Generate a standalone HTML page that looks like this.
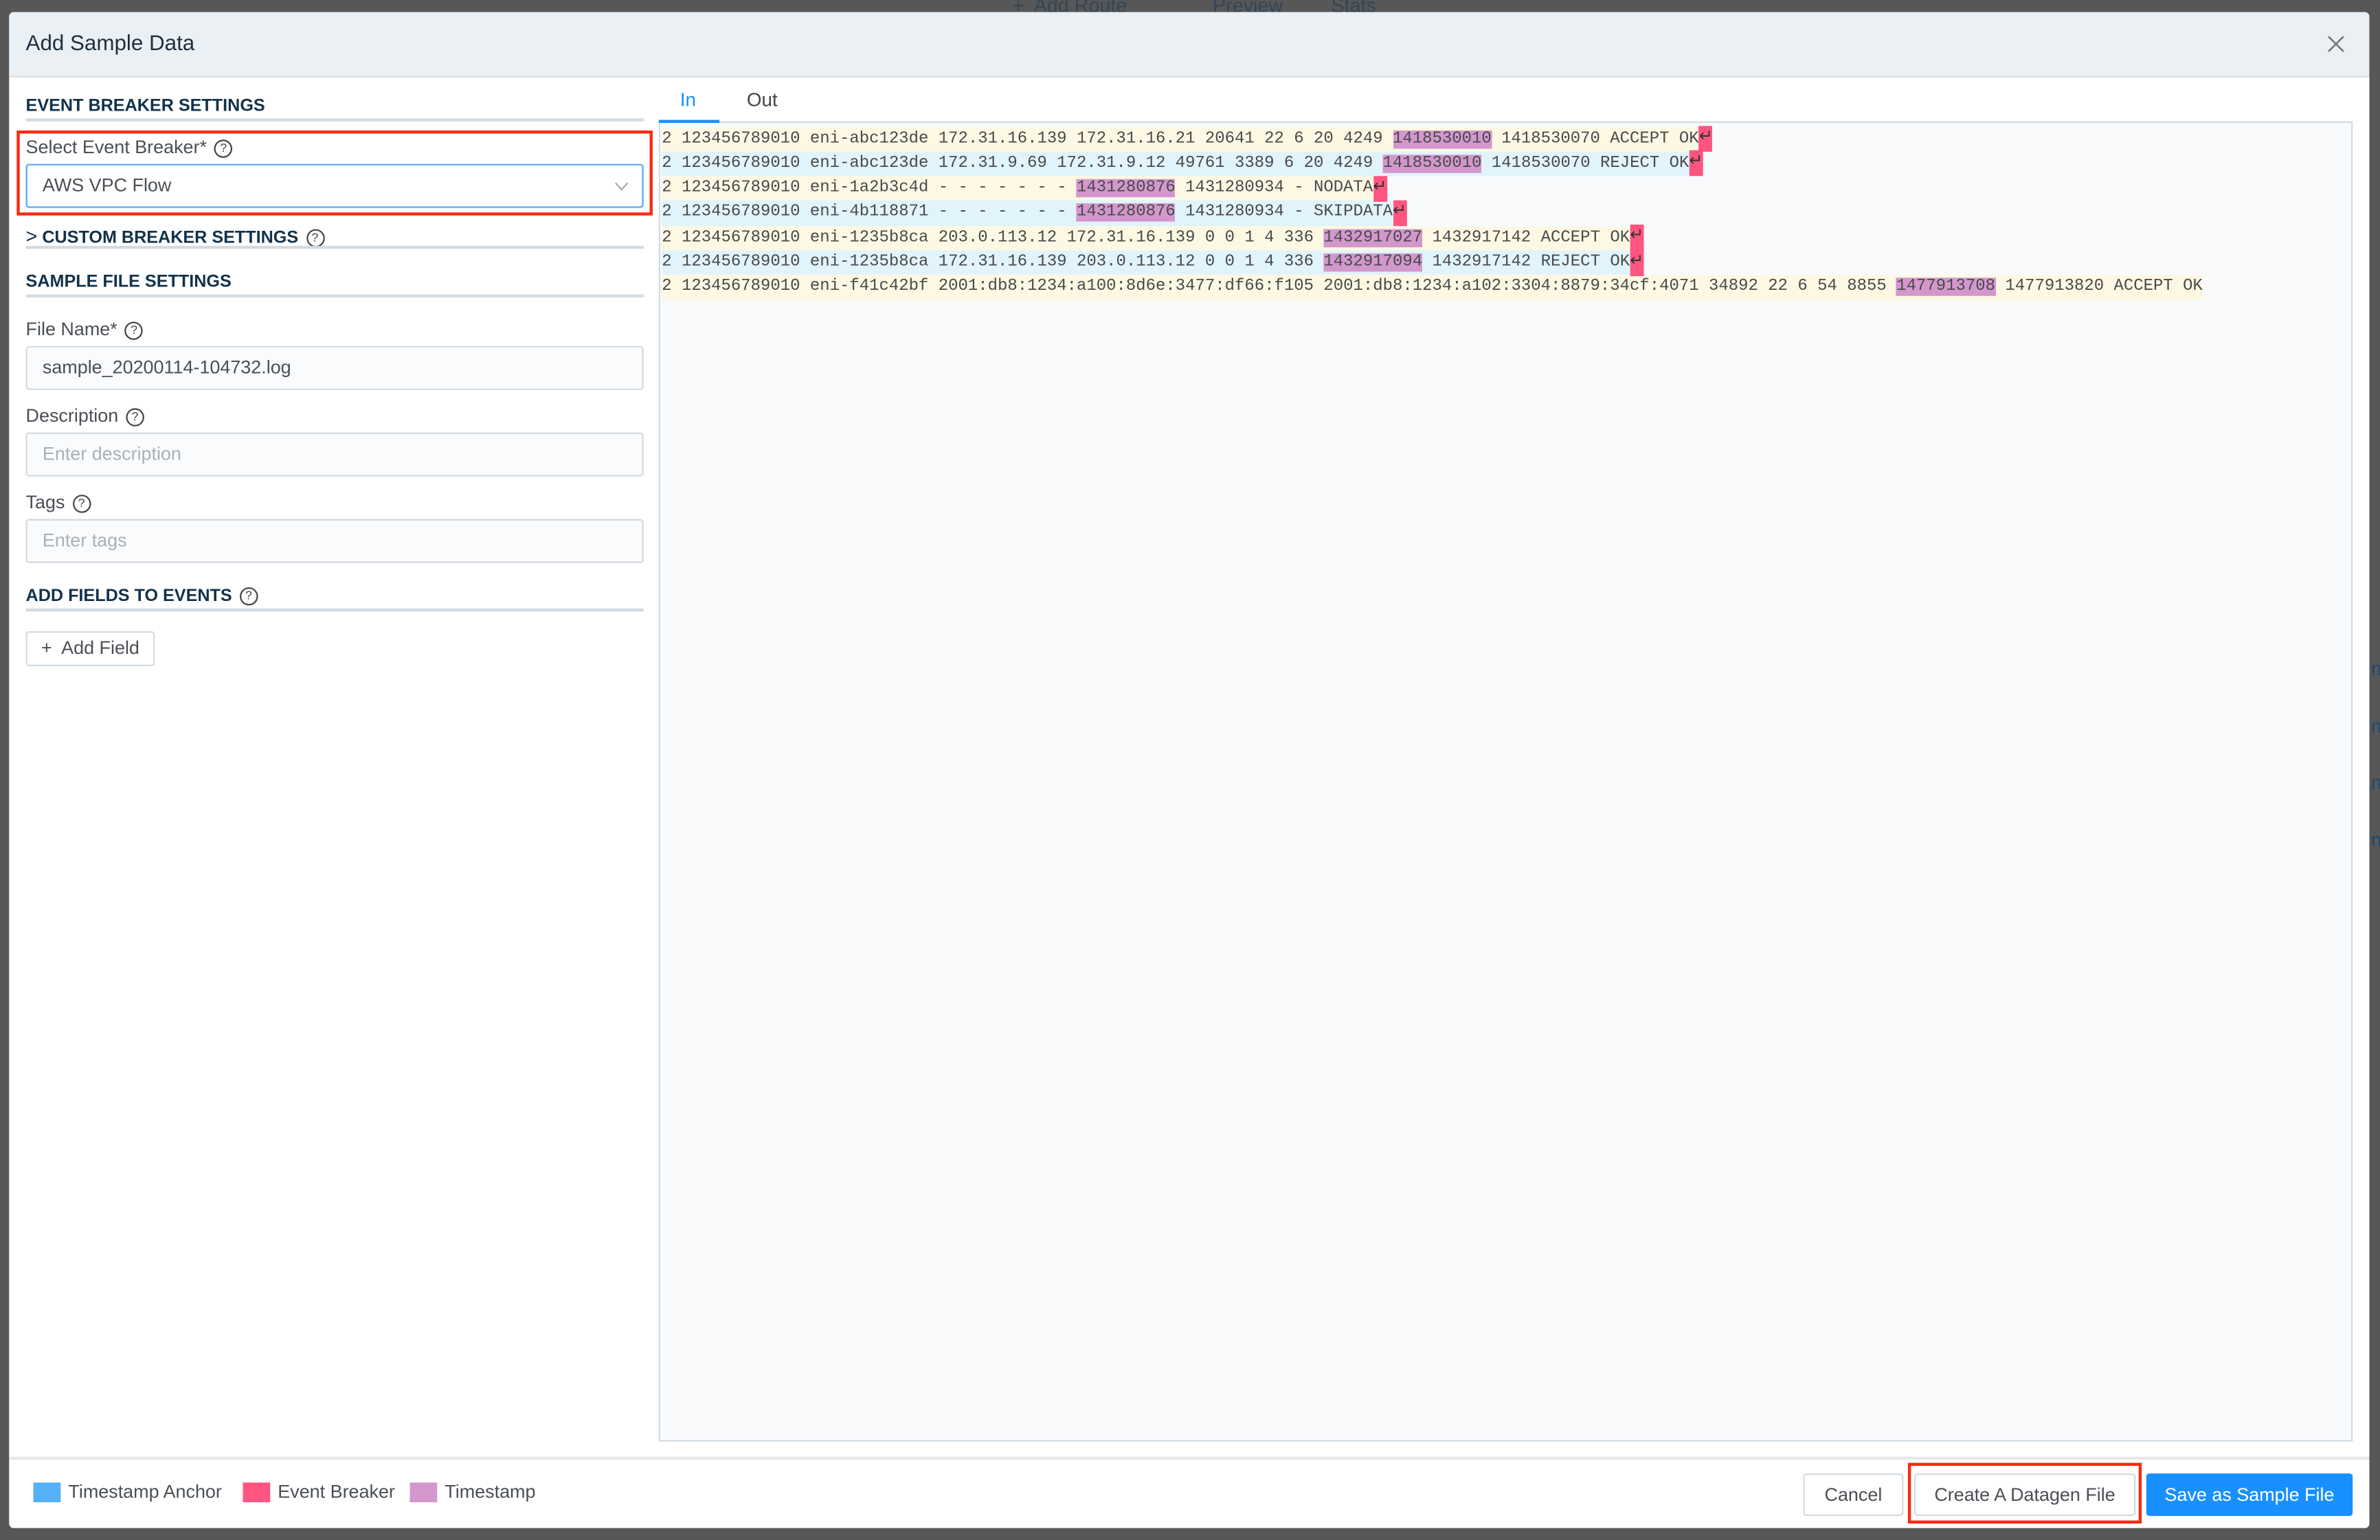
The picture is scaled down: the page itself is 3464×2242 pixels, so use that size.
<!DOCTYPE html>
<html><head><meta charset="utf-8">
<style>
html,body{margin:0;padding:0;width:3464px;height:2242px;overflow:hidden;background:#575757;}
#w{position:absolute;left:0;top:0;width:1568px;height:1015px;transform:scale(2.20918);transform-origin:0 0;font-family:"Liberation Sans",sans-serif;}
.abs{position:absolute;}
.bgtxt{color:#1d3b55;font-size:13px;top:-4px;opacity:.6}
#modal{left:6px;top:8px;width:1555px;height:999px;background:#fff;border-radius:3px;overflow:hidden;}
#hdr{left:0;top:0;width:1555px;height:42px;background:#ebf0f4;border-bottom:1px solid #d5dde5;}
.sec{font-size:11.4px;font-weight:bold;color:#12324a;}
.line{height:1.5px;background:#d3dbe2;}
.lbl{font-size:12.2px;color:#4a4f55;}
.q{display:inline-block;width:10px;height:10px;border:1px solid #444;border-radius:50%;font-size:8px;line-height:10px;text-align:center;color:#444;vertical-align:1px;margin-left:5px;font-weight:normal}
.inp{border:1px solid #d3dbe2;border-radius:2px;background:#fafbfc;font-size:12.2px;line-height:27px;padding-left:10px;box-sizing:border-box;width:407px;height:29px;}
.ph{color:#aab0b6}
#log{left:428px;top:73px;width:1114px;height:868px;background:#f9fafc;border:1px solid #d3dbe2;border-top:none;}
.rows{position:absolute;left:1px;top:2.5px;font-family:"Liberation Mono",monospace;font-size:10.85px;color:#4a4a4a;white-space:pre;}
.r{display:block;width:fit-content;height:16.33px;line-height:16.33px;}
.y{background:#fdf8e4}.b{background:#e1f4fc}
.ts{background:#d397cd}
.eb{background:#ff5580;display:inline-block;height:17px;vertical-align:top;margin-top:-0.5px;color:#333}
.btn{border:1px solid #d3dbe2;border-radius:2px;background:#fff;font-size:12.2px;color:#4a4f55;text-align:center;box-sizing:border-box;}
</style></head><body><div id="w">
<div class="abs bgtxt" style="left:667px">+&nbsp; Add Route</div>
<div class="abs bgtxt" style="left:799px">Preview</div>
<div class="abs bgtxt" style="left:877px">Stats</div>
<div class="abs" style="left:1562px;top:422px;color:#1d4a70;font-size:13px;line-height:37.5px">n<br>n<br>n<br>n</div>
<div id="modal" class="abs">
 <div id="hdr" class="abs"><div class="abs" style="left:11px;top:13px;font-size:14.2px;color:#1f2f3d">Add Sample Data</div>
 <svg class="abs" style="left:1527px;top:15px" width="12" height="12" viewBox="0 0 12 12"><path d="M1 1L11 11M11 1L1 11" stroke="#777" stroke-width="1.2"/></svg></div>
 <div class="abs sec" style="left:11px;top:56px">EVENT BREAKER SETTINGS</div>
 <div class="abs line" style="left:11px;top:70px;width:407px"></div>
 <div class="abs" style="left:5px;top:78px;width:415px;height:52px;border:2px solid #fb2a10"></div>
 <div class="abs lbl" style="left:11px;top:82px">Select Event Breaker*<span class="q">?</span></div>
 <div class="abs inp" style="left:11px;top:100px;border:1.5px solid #52aaf0;background:#fff;color:#4a4f55">AWS VPC Flow
  <svg class="abs" style="left:387px;top:11px" width="9" height="6" viewBox="0 0 9 6"><path d="M0.5 0.5L4.5 5L8.5 0.5" stroke="#aaa" fill="none"/></svg></div>
 <div class="abs sec" style="left:11px;top:140px"><span style="font-weight:normal;font-size:13px">&gt;</span> CUSTOM BREAKER SETTINGS<span class="q">?</span></div>
 <div class="abs line" style="left:11px;top:154px;width:407px"></div>
 <div class="abs sec" style="left:11px;top:172px">SAMPLE FILE SETTINGS</div>
 <div class="abs line" style="left:11px;top:186px;width:407px"></div>
 <div class="abs lbl" style="left:11px;top:202px">File Name*<span class="q">?</span></div>
 <div class="abs inp" style="left:11px;top:220px;color:#4a4f55">sample_20200114-104732.log</div>
 <div class="abs lbl" style="left:11px;top:259px">Description<span class="q">?</span></div>
 <div class="abs inp ph" style="left:11px;top:277px">Enter description</div>
 <div class="abs lbl" style="left:11px;top:316px">Tags<span class="q">?</span></div>
 <div class="abs inp ph" style="left:11px;top:334px">Enter tags</div>
 <div class="abs sec" style="left:11px;top:379px">ADD FIELDS TO EVENTS<span class="q">?</span></div>
 <div class="abs line" style="left:11px;top:393px;width:407px"></div>
 <div class="abs btn" style="left:11px;top:408px;width:85px;height:23px;line-height:21px">+&nbsp; Add Field</div>
 <div class="abs" style="left:442px;top:51px;font-size:12.6px;color:#1890ff">In</div>
 <div class="abs" style="left:486px;top:51px;font-size:12.6px;color:#444">Out</div>
 <div class="abs" style="left:428px;top:72px;width:1116px;height:1.5px;background:#d3dbe2"></div>
 <div class="abs" style="left:428px;top:71px;width:40px;height:3px;background:#1890ff"></div>
 <div id="log" class="abs"><div class="rows"><span class="r y">2 123456789010 eni-abc123de 172.31.16.139 172.31.16.21 20641 22 6 20 4249 <span class="ts">1418530010</span> 1418530070 ACCEPT OK<span class="eb">↵</span></span><span class="r b">2 123456789010 eni-abc123de 172.31.9.69 172.31.9.12 49761 3389 6 20 4249 <span class="ts">1418530010</span> 1418530070 REJECT OK<span class="eb">↵</span></span><span class="r y">2 123456789010 eni-1a2b3c4d - - - - - - - <span class="ts">1431280876</span> 1431280934 - NODATA<span class="eb">↵</span></span><span class="r b">2 123456789010 eni-4b118871 - - - - - - - <span class="ts">1431280876</span> 1431280934 - SKIPDATA<span class="eb">↵</span></span><span class="r y">2 123456789010 eni-1235b8ca 203.0.113.12 172.31.16.139 0 0 1 4 336 <span class="ts">1432917027</span> 1432917142 ACCEPT OK<span class="eb">↵</span></span><span class="r b">2 123456789010 eni-1235b8ca 172.31.16.139 203.0.113.12 0 0 1 4 336 <span class="ts">1432917094</span> 1432917142 REJECT OK<span class="eb">↵</span></span><span class="r y">2 123456789010 eni-f41c42bf 2001:db8:1234:a100:8d6e:3477:df66:f105 2001:db8:1234:a102:3304:8879:34cf:4071 34892 22 6 54 8855 <span class="ts">1477913708</span> 1477913820 ACCEPT OK</span></div></div>
 <div class="abs" style="left:0;top:952px;width:1555px;height:1.5px;background:#e6e8ea"></div>
 <div class="abs" style="left:16px;top:969px;width:18px;height:13px;background:#55b0f5"></div>
 <div class="abs lbl" style="left:39px;top:968px">Timestamp Anchor</div>
 <div class="abs" style="left:154px;top:969px;width:18px;height:13px;background:#ff5580"></div>
 <div class="abs lbl" style="left:177px;top:968px">Event Breaker</div>
 <div class="abs" style="left:264px;top:969px;width:18px;height:13px;background:#d397cd"></div>
 <div class="abs lbl" style="left:287px;top:968px">Timestamp</div>
 <div class="abs btn" style="left:1182px;top:963px;width:66px;height:28px;line-height:26px">Cancel</div>
 <div class="abs" style="left:1251px;top:956px;width:154px;height:40px;border:2px solid #fb2a10;box-sizing:border-box"></div>
 <div class="abs btn" style="left:1255px;top:963px;width:146px;height:28px;line-height:26px">Create A Datagen File</div>
 <div class="abs btn" style="left:1408px;top:963px;width:136px;height:28px;line-height:28px;background:#1890ff;border:none;color:#fff">Save as Sample File</div>
</div>
</div></body></html>
